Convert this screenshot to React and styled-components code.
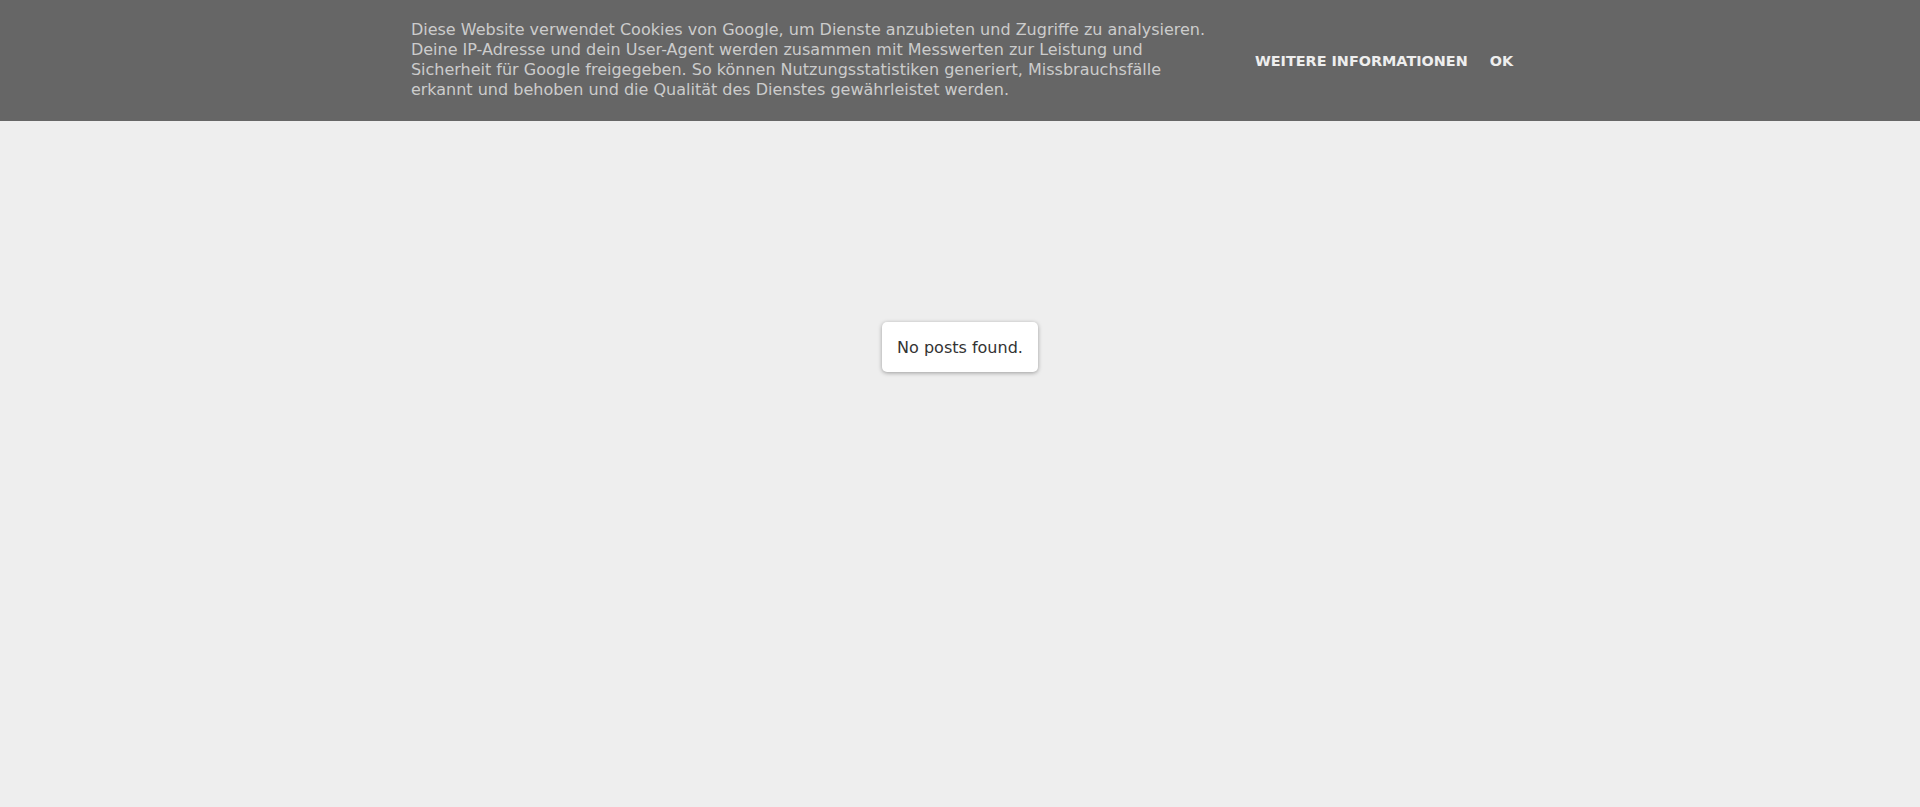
import React from "react";
import styled, { createGlobalStyle } from "styled-components";

const GlobalStyle = createGlobalStyle`
  html, body {
    margin: 0;
    padding: 0;
    background: #eeeeee;
    font-family: "DejaVu Sans", Verdana, sans-serif;
  }
`;

const Page = styled.div`
  min-height: 807px;
  background: #eeeeee;
`;

const CookieBar = styled.div`
  background-color: #666666;
  height: 121px;
  padding-left: 4px;
  box-sizing: border-box;
  display: flex;
  justify-content: center;
  align-items: center;
`;

const CookieText = styled.p`
  width: 800px;
  margin: 0 44px 0 0;
  font-size: 16px;
  line-height: 20px;
  color: #cccccc;
  text-align: left;
  transform: translateY(-1px);
`;

const Buttons = styled.div`
  display: flex;
  align-items: center;
  gap: 22px;
`;

const CookieButton = styled.a`
  font-size: 14.4px;
  font-weight: bold;
  text-transform: uppercase;
  color: #eeeeee;
  text-decoration: none;
  cursor: pointer;
`;

const Main = styled.main`
  display: flex;
  justify-content: center;
  padding-top: 201px;
`;

const Notice = styled.div`
  background: #ffffff;
  border-radius: 5px;
  box-shadow: 0 1px 4px rgba(0, 0, 0, 0.35);
  padding: 0 15px;
  height: 50px;
  display: flex;
  align-items: center;
  font-size: 16px;
  color: #333333;
`;

export default function App() {
  return (
    <Page>
      <GlobalStyle />
      <CookieBar>
        <CookieText>
          Diese Website verwendet Cookies von Google, um Dienste anzubieten und
          Zugriffe zu analysieren. Deine IP-Adresse und dein User-Agent werden
          zusammen mit Messwerten zur Leistung und Sicherheit für Google
          freigegeben. So können Nutzungsstatistiken generiert,
          Missbrauchsfälle erkannt und behoben und die Qualität des Dienstes
          gewährleistet werden.
        </CookieText>
        <Buttons>
          <CookieButton>Weitere Informationen</CookieButton>
          <CookieButton>Ok</CookieButton>
        </Buttons>
      </CookieBar>
      <Main>
        <Notice>No posts found.</Notice>
      </Main>
    </Page>
  );
}
